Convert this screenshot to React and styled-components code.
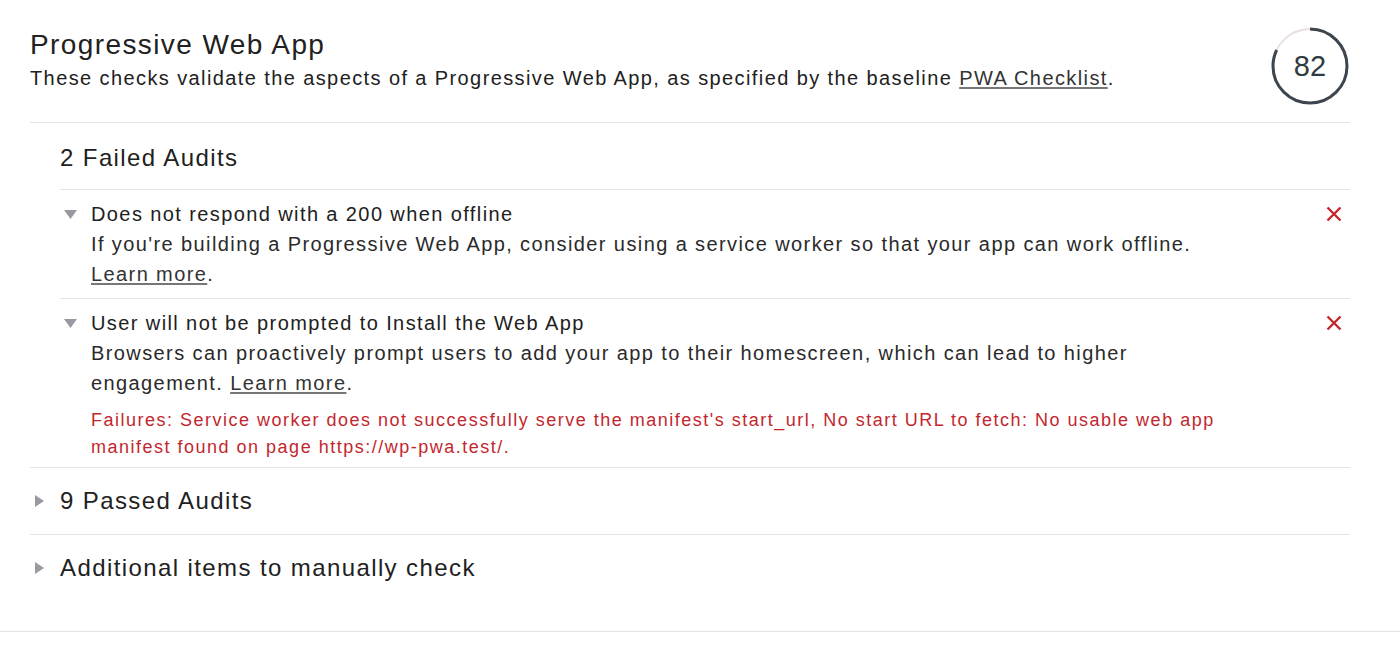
import React from 'react';
import styled, { createGlobalStyle } from 'styled-components';

const Global = createGlobalStyle`
  body {
    margin: 0;
    background: #ffffff;
    font-family: 'Liberation Sans', Arial, sans-serif;
    color: #212121;
    letter-spacing: 1.4px;
  }
`;

const Section = styled.section`
  padding: 0 50px 30px 30px;
  border-bottom: 1px solid #e6e2e2;
`;

const Header = styled.header`
  display: flex;
  justify-content: space-between;
  align-items: flex-start;
  padding: 28px 0 16px;
  border-bottom: 1px solid #e6e2e2;
`;

const Title = styled.h1`
  margin: 0;
  font-size: 28px;
  line-height: 34px;
  font-weight: normal;
`;

const Description = styled.p`
  margin: 2px 0 0;
  font-size: 20px;
  line-height: 28px;
`;

const Link = styled.a`
  color: #333;
  text-decoration: underline;
  text-decoration-color: #777;
  text-underline-offset: 2px;
`;

const GaugeWrap = styled.div`
  position: relative;
  width: 80px;
  height: 80px;
  margin-top: -2px;
  flex-shrink: 0;
`;

const GaugeValue = styled.span`
  position: absolute;
  inset: 0;
  display: flex;
  align-items: center;
  justify-content: center;
  font-size: 29px;
  letter-spacing: 0;
  color: #333b42;
`;

const Group = styled.div`
  border-bottom: ${(p) => (p.$last ? 'none' : '1px solid #e6e2e2')};
`;

const GroupHeading = styled.div`
  display: flex;
  align-items: center;
  padding: ${(p) => (p.$open ? '20px 0 16px' : '18px 0')};
  margin-left: ${(p) => (p.$open ? '30px' : '0')};
  border-bottom: ${(p) => (p.$open ? '1px solid #e6e2e2' : 'none')};
  font-size: 24px;
  line-height: 30px;
`;

const Marker = styled.span`
  width: 30px;
  flex-shrink: 0;
  display: flex;
  align-items: center;
  padding-left: 5px;
  box-sizing: border-box;
`;

const Audit = styled.div`
  display: flex;
  align-items: flex-start;
  margin-left: 30px;
  padding: 9px 0 ${(p) => (p.$pad || 9)}px 4px;
  border-bottom: ${(p) => (p.$last ? 'none' : '1px solid #e6e2e2')};
`;

const Arrow = styled.span`
  width: 27px;
  flex-shrink: 0;
  height: 30px;
  display: flex;
  align-items: center;
`;

const AuditBody = styled.div`
  flex: 1;
  min-width: 0;
`;

const AuditTitle = styled.div`
  font-size: 20px;
  line-height: 30px;
`;

const AuditText = styled.div`
  font-size: 20px;
  line-height: 30px;
  color: #2a2a2a;
`;

const Failures = styled.div`
  margin-top: 9px;
  font-size: 18px;
  line-height: 27px;
  letter-spacing: 1.5px;
  color: #c3272e;
`;

const Status = styled.span`
  width: 110px;
  flex-shrink: 0;
  height: 30px;
  display: flex;
  align-items: center;
  justify-content: flex-end;
  padding-right: 8px;
  box-sizing: border-box;
`;

const Down = () => (
  <svg width="13" height="9" viewBox="0 0 13 9">
    <path d="M0 0H13L6.5 9Z" fill="#9a98a0" />
  </svg>
);

const Right = () => (
  <svg width="9" height="12" viewBox="0 0 9 12">
    <path d="M0 0L9 6L0 12Z" fill="#9a98a0" />
  </svg>
);

const Cross = () => (
  <svg width="16" height="16" viewBox="0 0 16 16">
    <path d="M1.5 1.5L14.5 14.5M14.5 1.5L1.5 14.5" stroke="#c3272e" strokeWidth="2.4" />
  </svg>
);

const Gauge = ({ value }) => {
  const r = 37;
  const c = 2 * Math.PI * r;
  return (
    <GaugeWrap>
      <svg width="80" height="80" viewBox="0 0 80 80">
        <circle cx="40" cy="40" r={r} fill="none" stroke="#e9dfe0" strokeWidth="2" />
        <circle
          cx="40"
          cy="40"
          r={r}
          fill="none"
          stroke="#3d464e"
          strokeWidth="3"
          strokeDasharray={`${(c * value) / 100} ${c}`}
          transform="rotate(-90 40 40)"
        />
      </svg>
      <GaugeValue>{value}</GaugeValue>
    </GaugeWrap>
  );
};

export default function App() {
  return (
    <>
      <Global />
      <Section>
        <Header>
          <div>
            <Title>Progressive Web App</Title>
            <Description>
              These checks validate the aspects of a Progressive Web App, as specified by the baseline{' '}
              <Link href="#">PWA Checklist</Link>.
            </Description>
          </div>
          <Gauge value={82} />
        </Header>

        <Group>
          <GroupHeading $open>2 Failed Audits</GroupHeading>
          <Audit>
            <Arrow><Down /></Arrow>
            <AuditBody>
              <AuditTitle>Does not respond with a 200 when offline</AuditTitle>
              <AuditText>
                If you're building a Progressive Web App, consider using a service worker so that your app can work offline.{' '}
                <Link href="#">Learn more</Link>.
              </AuditText>
            </AuditBody>
            <Status><Cross /></Status>
          </Audit>
          <Audit $last $pad={6}>
            <Arrow><Down /></Arrow>
            <AuditBody>
              <AuditTitle>User will not be prompted to Install the Web App</AuditTitle>
              <AuditText>
                Browsers can proactively prompt users to add your app to their homescreen, which can lead to higher engagement.{' '}
                <Link href="#">Learn more</Link>.
              </AuditText>
              <Failures>
                Failures: Service worker does not successfully serve the manifest's start_url, No start URL to fetch: No usable web app manifest found on page https://wp-pwa.test/.
              </Failures>
            </AuditBody>
            <Status><Cross /></Status>
          </Audit>
        </Group>

        <Group>
          <GroupHeading><Marker><Right /></Marker>9 Passed Audits</GroupHeading>
        </Group>

        <Group $last>
          <GroupHeading><Marker><Right /></Marker>Additional items to manually check</GroupHeading>
        </Group>
      </Section>
    </>
  );
}
